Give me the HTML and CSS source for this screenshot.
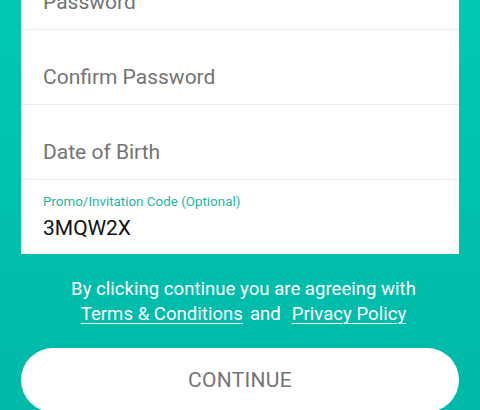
FILE: index.html
```html
<!DOCTYPE html>
<html>
<head>
<meta charset="utf-8">
<link rel="stylesheet" href="styles.css">
</head>
<body>
<div class="screen">
  <div class="card">
    <div class="field"><span class="placeholder">Password</span></div>
    <div class="field"><span class="placeholder">Confirm Password</span></div>
    <div class="field"><span class="placeholder">Date of Birth</span></div>
    <div class="field filled">
      <span class="label">Promo/Invitation Code (Optional)</span>
      <span class="value">3MQW2X</span>
    </div>
  </div>
  <p class="agree">By clicking continue you are agreeing with<br><a class="link">Terms &amp; Conditions</a><span class="and">and</span><a class="link">Privacy Policy</a></p>
  <button class="continue">CONTINUE</button>
</div>
</body>
</html>
```
FILE: styles.css
```css
html, body {
  margin: 0;
  padding: 0;
  height: 100%;
  overflow: hidden;
}
body {
  background: linear-gradient(180deg, #00c8b4 0%, #00b9a8 100%);
  font-family: Roboto, "Noto Sans", sans-serif;
}
.screen {
  padding: 0 21px;
  display: flex;
  flex-direction: column;
}
.card {
  background: #ffffff;
  margin-top: -45px;
  display: flex;
  flex-direction: column;
}
.field {
  height: 75px;
  box-sizing: border-box;
  border-bottom: 1px solid #ececec;
  padding: 0 22px 15px;
  display: flex;
  flex-direction: column;
  justify-content: flex-end;
}
.field.filled {
  border-bottom: none;
  height: 74px;
  padding-bottom: 14px;
}
.placeholder {
  font-size: 21px;
  line-height: 24px;
  color: #737373;
}
.label {
  font-size: 13.4px;
  line-height: 18px;
  color: #1db5a3;
  margin-bottom: 5px;
}
.value {
  font-size: 21px;
  line-height: 24px;
  color: #111111;
}
.agree {
  margin: 23px 0 0;
  padding-left: 7px;
  text-align: center;
  color: #ffffff;
  font-size: 18.6px;
  line-height: 25px;
}
.link {
  text-decoration: underline;
  text-underline-offset: 3px;
  text-decoration-thickness: 1px;
}
.and {
  margin: 0 11px 0 7px;
}
.continue {
  margin-top: 21px;
  height: 64px;
  border: none;
  border-radius: 32px;
  background: #ffffff;
  color: #757575;
  font-family: Roboto, "Noto Sans", sans-serif;
  font-size: 21px;
  letter-spacing: 0.3px;
}
```
